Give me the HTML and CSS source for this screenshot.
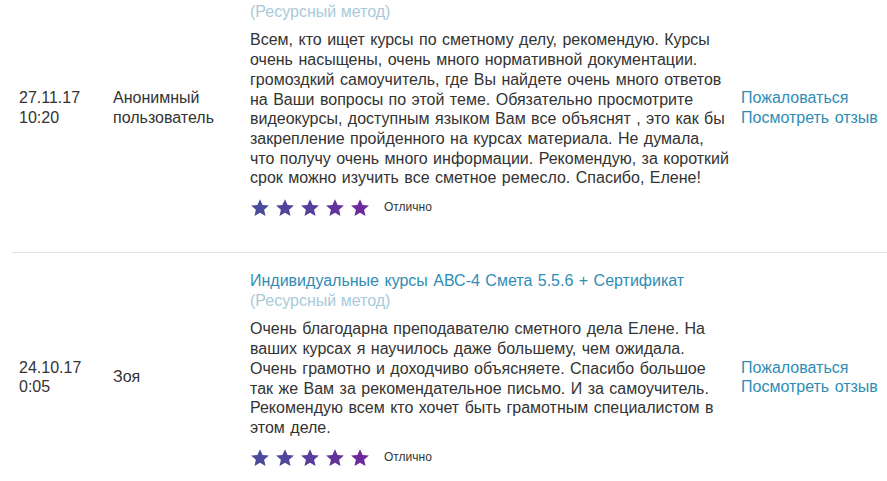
FILE: index.html
```html
<!DOCTYPE html>
<html lang="ru">
<head>
<meta charset="utf-8">
<title>Отзывы</title>
<link rel="stylesheet" href="styles.css">
</head>
<body>
<div class="reviews">
  <div class="review-row">
    <div class="cell date">27.11.17<br>10:20</div>
    <div class="cell author">Анонимный пользователь</div>
    <div class="cell body">
      <a class="course" href="#">Индивидуальные курсы АВС-4 Смета 5.5.6 + Сертификат</a>
      <div class="method">(Ресурсный метод)</div>
      <p class="text">Всем, кто ищет курсы по сметному делу, рекомендую. Курсы очень насыщены, очень много нормативной документации. громоздкий самоучитель, где Вы найдете очень много ответов на Ваши вопросы по этой теме. Обязательно просмотрите видеокурсы, доступным языком Вам все объяснят , это как бы закрепление пройденного на курсах материала. Не думала, что получу очень много информации. Рекомендую, за короткий срок можно изучить все сметное ремесло. Спасибо, Елене!</p>
      <div class="rating">
        <span class="stars">
          <svg class="star" viewBox="0 0 20 20"><path d="M10 1.2l2.6 5.8 6.3.6-4.8 4.2 1.4 6.2L10 14.8 4.5 18l1.4-6.2L1.1 7.6l6.3-.6z"/></svg>
          <svg class="star" viewBox="0 0 20 20"><path d="M10 1.2l2.6 5.8 6.3.6-4.8 4.2 1.4 6.2L10 14.8 4.5 18l1.4-6.2L1.1 7.6l6.3-.6z"/></svg>
          <svg class="star" viewBox="0 0 20 20"><path d="M10 1.2l2.6 5.8 6.3.6-4.8 4.2 1.4 6.2L10 14.8 4.5 18l1.4-6.2L1.1 7.6l6.3-.6z"/></svg>
          <svg class="star" viewBox="0 0 20 20"><path d="M10 1.2l2.6 5.8 6.3.6-4.8 4.2 1.4 6.2L10 14.8 4.5 18l1.4-6.2L1.1 7.6l6.3-.6z"/></svg>
          <svg class="star" viewBox="0 0 20 20"><path d="M10 1.2l2.6 5.8 6.3.6-4.8 4.2 1.4 6.2L10 14.8 4.5 18l1.4-6.2L1.1 7.6l6.3-.6z"/></svg>
        </span>
        <span class="grade">Отлично</span>
      </div>
    </div>
    <div class="cell actions">
      <a href="#">Пожаловаться</a>
      <a href="#">Посмотреть отзыв</a>
    </div>
  </div>
  <div class="review-row">
    <div class="cell date">24.10.17<br>0:05</div>
    <div class="cell author">Зоя</div>
    <div class="cell body">
      <a class="course" href="#">Индивидуальные курсы АВС-4 Смета 5.5.6 + Сертификат</a>
      <div class="method">(Ресурсный метод)</div>
      <p class="text">Очень благодарна преподавателю сметного дела Елене. На ваших курсах я научилось даже большему, чем ожидала. Очень грамотно и доходчиво объясняете. Спасибо большое так же Вам за рекомендательное письмо. И за самоучитель. Рекомендую всем кто хочет быть грамотным специалистом в этом деле.</p>
      <div class="rating">
        <span class="stars">
          <svg class="star" viewBox="0 0 20 20"><path d="M10 1.2l2.6 5.8 6.3.6-4.8 4.2 1.4 6.2L10 14.8 4.5 18l1.4-6.2L1.1 7.6l6.3-.6z"/></svg>
          <svg class="star" viewBox="0 0 20 20"><path d="M10 1.2l2.6 5.8 6.3.6-4.8 4.2 1.4 6.2L10 14.8 4.5 18l1.4-6.2L1.1 7.6l6.3-.6z"/></svg>
          <svg class="star" viewBox="0 0 20 20"><path d="M10 1.2l2.6 5.8 6.3.6-4.8 4.2 1.4 6.2L10 14.8 4.5 18l1.4-6.2L1.1 7.6l6.3-.6z"/></svg>
          <svg class="star" viewBox="0 0 20 20"><path d="M10 1.2l2.6 5.8 6.3.6-4.8 4.2 1.4 6.2L10 14.8 4.5 18l1.4-6.2L1.1 7.6l6.3-.6z"/></svg>
          <svg class="star" viewBox="0 0 20 20"><path d="M10 1.2l2.6 5.8 6.3.6-4.8 4.2 1.4 6.2L10 14.8 4.5 18l1.4-6.2L1.1 7.6l6.3-.6z"/></svg>
        </span>
        <span class="grade">Отлично</span>
      </div>
    </div>
    <div class="cell actions">
      <a href="#">Пожаловаться</a>
      <a href="#">Посмотреть отзыв</a>
    </div>
  </div>
</div>
</body>
</html>
```

FILE: styles.css
```css
html, body {
  margin: 0;
  padding: 0;
  background: #fff;
  overflow: hidden;
}
body {
  font-family: "Liberation Sans", Arial, sans-serif;
  font-size: 16px;
  word-spacing: 1px;
  line-height: 19.7px;
  color: #333;
}
.reviews {
  margin-top: -36px;
  margin-left: 12px;
}
.review-row {
  display: grid;
  grid-template-columns: 94px 137px 491px auto;
  align-items: center;
  padding-left: 7px;
  border-bottom: 1px solid #e3e3e3;
}
.date {
  word-spacing: 0;
}
.cell.body {
  align-self: start;
  padding: 18px 9px 34px 0;
}
.course {
  display: block;
  color: #2f8db5;
  text-decoration: none;
}
.method {
  color: #a8cadb;
  word-spacing: 0;
}
.text {
  margin: 9px 0 10px;
}
.rating {
  display: flex;
  align-items: center;
  height: 20px;
}
.stars {
  display: flex;
  gap: 5px;
}
.star {
  width: 20px;
  height: 20px;
  display: block;
}
.star:nth-child(1) { fill: #4a4b9b; }
.star:nth-child(2) { fill: #4f459c; }
.star:nth-child(3) { fill: #573e9c; }
.star:nth-child(4) { fill: #61349c; }
.star:nth-child(5) { fill: #6c2a9d; }
.grade {
  margin-left: 14px;
  font-size: 12px;
  word-spacing: 0;
  color: #333;
}
.actions {
  display: flex;
  flex-direction: column;
  white-space: nowrap;
}
.actions a {
  color: #2f8db5;
  text-decoration: none;
}
```
